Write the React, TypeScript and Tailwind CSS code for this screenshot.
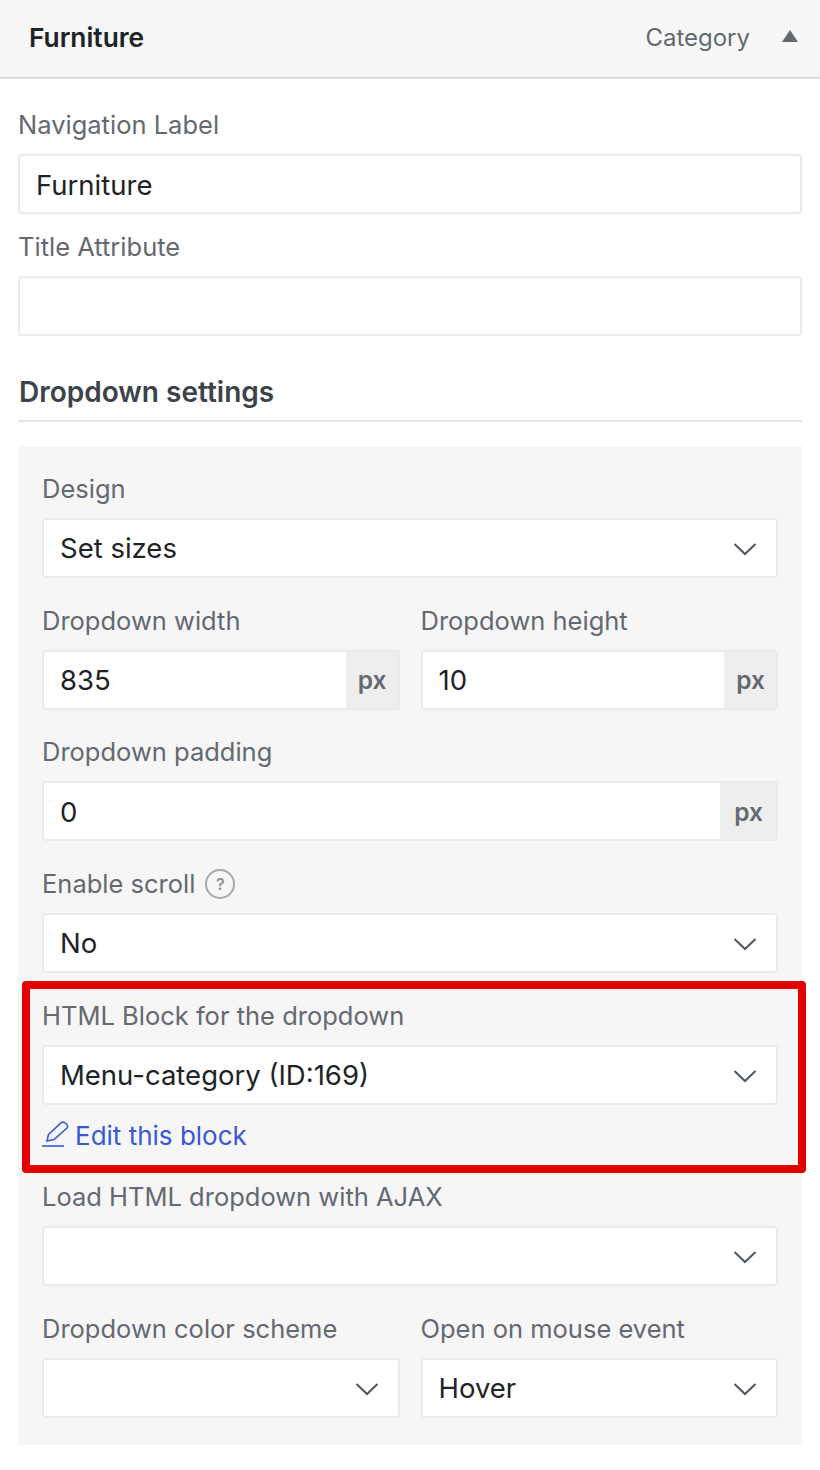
import React from "react";

const ChevronDown = () => (
  <svg width="24" height="14" viewBox="0 0 24 14" fill="none" className="absolute right-[19px] top-[22px]">
    <path d="M1.5 2 L12 12 L22.5 2" stroke="#50575e" strokeWidth="2" />
  </svg>
);

const boxClass = "h-[60px] rounded-[4px] border-2 border-[#ebebeb] bg-white";

function Label({ children, className = "" }: { children: React.ReactNode; className?: string }) {
  return <div className={`text-[25.5px] leading-[32px] text-[#646970] ${className}`}>{children}</div>;
}

function TextBox({ value }: { value?: string }) {
  return (
    <div className={`${boxClass} flex items-center pl-[16px] pt-[3px] text-[27.5px] text-[#1d2327]`}>{value}</div>
  );
}

function SelectBox({ value }: { value?: string }) {
  return (
    <div className={`${boxClass} relative flex items-center pl-[16px] pt-[2px] text-[27.5px] text-[#1d2327]`}>
      {value}
      <ChevronDown />
    </div>
  );
}

function UnitBox({ value, unitClass, valueClass = "pt-[2px]" }: { value: string; unitClass: string; valueClass?: string }) {
  return (
    <div className={`${boxClass} flex items-stretch overflow-hidden text-[27.5px] text-[#1d2327]`}>
      <div className={`flex flex-1 items-center pl-[16px] ${valueClass}`}>{value}</div>
      <div className={`flex items-center justify-center bg-[#eeeeef] pl-[1px] text-[24.5px] font-semibold text-[#646970] ${unitClass}`}>px</div>
    </div>
  );
}

export default function App() {
  return (
    <div className="h-[1470px] w-[820px] overflow-hidden bg-white font-['Inter',sans-serif]">
      {/* Item header */}
      <div className="flex h-[79px] items-center justify-between border-b-2 border-[#dcdcde] bg-[#f7f7f7] pb-[2px] pl-[29px] pr-[22px]">
        <span className="text-[26.3px] font-semibold text-[#1d2327]">Furniture</span>
        <div className="flex items-center gap-[32px]">
          <span className="text-[24px] text-[#646970]">Category</span>
          <svg width="16" height="12" viewBox="0 0 16 12" className="mb-[3px]">
            <path d="M8 0 L16 12 L0 12 Z" fill="#646970" />
          </svg>
        </div>
      </div>

      <div className="px-[18px]">
        <Label className="mt-[30px] mb-[13px]">Navigation Label</Label>
        <TextBox value="Furniture" />
        <Label className="mt-[17px] mb-[13px]">Title Attribute</Label>
        <TextBox />

        <div className="mt-[39px] border-b-2 border-[#e4e4e4] pb-[11px] pl-[1px] pt-[1px] text-[28px] font-semibold leading-[33px] text-[#3c434a]">
          Dropdown settings
        </div>

        {/* Settings panel */}
        <div className="mt-[24px] h-[999px] bg-[#f6f6f7] px-[24px] pt-[27px]">
          <Label className="mb-[13px]">Design</Label>
          <SelectBox value="Set sizes" />

          <div className="mt-[27px] flex gap-[21px]">
            <div className="flex-1">
              <Label className="mb-[13px]">Dropdown width</Label>
              <UnitBox value="835" unitClass="w-[52px] pt-[1px]" />
            </div>
            <div className="flex-1">
              <Label className="mb-[13px]">Dropdown height</Label>
              <UnitBox value="10" unitClass="w-[52px] pt-[1px]" />
            </div>
          </div>

          <Label className="mt-[26px] mb-[13px]">Dropdown padding</Label>
          <UnitBox value="0" unitClass="w-[56px] pt-[2px]" valueClass="pt-[3px]" />

          <Label className="mt-[27px] mb-[13px] flex items-center gap-[10px]">
            Enable scroll
            <span className="flex h-[30px] w-[30px] items-center justify-center rounded-full border-2 border-[#a7aaad] text-[16px] font-semibold text-[#8c8f94]">?</span>
          </Label>
          <SelectBox value="No" />

          {/* Highlighted block, the red frame is an annotation over it */}
          <div className="relative">
            <Label className="mt-[27px] mb-[13px]">HTML Block for the dropdown</Label>
            <SelectBox value="Menu-category (ID:169)" />
            <div className="mt-[13px] flex h-[34px] items-center gap-[6px] text-[26px] text-[#3858d6]">
              <svg width="27" height="28" viewBox="0 0 27 28" fill="none" stroke="#3858d6" strokeWidth="1.6">
                <path d="M5 20 L6.5 13.5 L19.5 1.5 Q21.5 0.5 24 2.5 Q26.5 5 25 7 L12 18.5 Z" />
                <path d="M0 25 H22" />
              </svg>
              Edit this block
            </div>
            <div className="pointer-events-none absolute left-[-20px] top-[-19px] h-[192px] w-[784px] rounded-[4px] border-[8px] border-[#e30000]" />
          </div>

          <Label className="mt-[29px] mb-[13px]">Load HTML dropdown with AJAX</Label>
          <SelectBox />

          <div className="mt-[27px] flex gap-[21px]">
            <div className="flex-1">
              <Label className="mb-[13px]">Dropdown color scheme</Label>
              <SelectBox />
            </div>
            <div className="flex-1">
              <Label className="mb-[13px]">Open on mouse event</Label>
              <SelectBox value="Hover" />
            </div>
          </div>
        </div>
      </div>
    </div>
  );
}
